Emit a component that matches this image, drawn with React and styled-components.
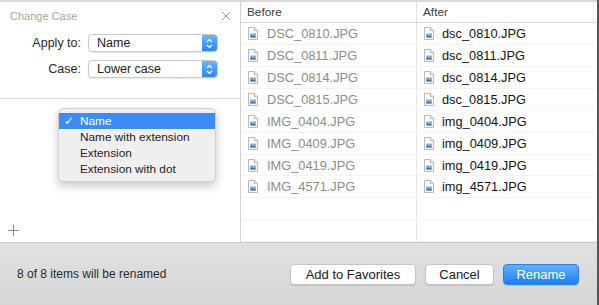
import styled, { createGlobalStyle } from "styled-components";

const GlobalStyle = createGlobalStyle`
  html, body {
    margin: 0;
    padding: 0;
    background: #555;
  }
  body {
    font-family: "Liberation Sans", Helvetica, Arial, sans-serif;
    -webkit-font-smoothing: antialiased;
  }
`;

const Window = styled.div`
  width: 597px;
  height: 305px;
  box-sizing: border-box;
  border-top: 2px solid #d9d9d9;
  background: #fff;
  display: flex;
  flex-direction: column;
`;

const Main = styled.div`
  display: flex;
  height: 240px;
`;

const LeftPanel = styled.div`
  position: relative;
  width: 240px;
  border-right: 1px solid #d4d4d4;
  display: flex;
  flex-direction: column;
`;

const TitleBar = styled.div`
  height: 28px;
  padding: 0 9px 0 10px;
  display: flex;
  align-items: center;
  justify-content: space-between;
  font-size: 11px;
  color: #a3a3a3;
`;

const CloseIcon = styled.svg`
  width: 10px;
  height: 10px;
`;

const Form = styled.div`
  display: grid;
  grid-template-columns: 81px 130px;
  column-gap: 7px;
  row-gap: 8px;
  margin-top: 4px;
  padding-bottom: 20px;
  border-bottom: 1px solid #d6d6d6;
  align-items: center;
`;

const Label = styled.div`
  text-align: right;
  font-size: 12.5px;
  color: #2a2a2a;
`;

const Select = styled.div`
  height: 18px;
  box-sizing: border-box;
  border: 1px solid #c9c9c9;
  border-radius: 4px;
  background: #fff;
  display: flex;
  align-items: stretch;
  overflow: hidden;
  box-shadow: 0 1px 1px rgba(0, 0, 0, 0.08);
`;

const SelectValue = styled.div`
  flex: 1;
  padding-left: 8px;
  font-size: 12.5px;
  line-height: 16px;
  color: #222;
`;

const Stepper = styled.div`
  width: 15px;
  background: linear-gradient(#6db4fb, #2b85f5);
  display: flex;
  align-items: center;
  justify-content: center;
`;

const Spacer = styled.div`
  flex: 1;
  display: flex;
  align-items: flex-end;
  padding: 0 0 6px 8px;
`;

const PlusIcon = styled.svg`
  width: 11px;
  height: 11px;
`;

const Menu = styled.div`
  position: absolute;
  top: 106px;
  left: 58px;
  width: 158px;
  padding: 4px 0;
  background: #efefef;
  border-radius: 5px;
  border: 1px solid #d0d0d0;
  box-sizing: border-box;
  box-shadow: 0 4px 10px rgba(0, 0, 0, 0.22);
`;

const MenuItem = styled.div`
  height: 16px;
  display: flex;
  align-items: center;
  font-size: 11.8px;
  padding-left: 21px;
  position: relative;
  color: ${(p) => (p.active ? "#fff" : "#222")};
  background: ${(p) => (p.active ? "#3b8cf5" : "transparent")};
`;

const Check = styled.span`
  position: absolute;
  left: 5px;
  font-family: "DejaVu Sans", sans-serif;
  font-size: 12px;
`;

const RightPanel = styled.div`
  flex: 1;
  display: flex;
  flex-direction: column;
`;

const HeaderRow = styled.div`
  display: grid;
  grid-template-columns: 175px 1fr;
  height: 21px;
  border-bottom: 1px solid #d8d8d8;
`;

const HeaderCell = styled.div`
  display: flex;
  align-items: center;
  padding-left: 6px;
  font-size: 11.8px;
  color: #3c3c3c;
  border-left: ${(p) => (p.divided ? "1px solid #e2e2e2" : "none")};
  border-right: ${(p) => (p.last ? "1px solid #ececec" : "none")};
  margin-right: ${(p) => (p.last ? "3px" : "0")};
`;

const Row = styled.div`
  display: grid;
  grid-template-columns: 175px 1fr;
  height: 22.4px;
  box-sizing: border-box;
  border-bottom: 1px solid #f3f3f3;
`;

const Cell = styled.div`
  display: flex;
  align-items: center;
  gap: ${(p) => (p.after ? "8px" : "9px")};
  padding-left: 7px;
  font-size: 12.8px;
  color: ${(p) => (p.after ? "#141414" : "#8c8c8c")};
  border-left: ${(p) => (p.after ? "1px solid #e6e6e6" : "none")};
`;

const FileSvg = styled.svg`
  width: 10px;
  height: 13px;
  flex: none;
`;

const BottomBar = styled.div`
  flex: 1;
  display: flex;
  align-items: center;
  padding: 0 18px 0 17px;
  border-top: 1px solid #c9c9c9;
  background: linear-gradient(#e1e1e1, #d6d6d6);
`;

const Status = styled.div`
  flex: 1;
  font-size: 12px;
  color: #2a2a2a;
`;

const Buttons = styled.div`
  display: flex;
  gap: 9px;
`;

const Button = styled.button`
  height: 21px;
  width: ${(p) => p.w}px;
  border-radius: 4px;
  font-family: inherit;
  font-size: 13px;
  padding: 0;
  border: 1px solid ${(p) => (p.primary ? "#2a80ee" : "#c4c4c4")};
  color: ${(p) => (p.primary ? "#fff" : "#222")};
  background: ${(p) =>
    p.primary ? "linear-gradient(#64affb, #1f7ff4)" : "#fff"};
  box-shadow: 0 1px 1px rgba(0, 0, 0, 0.12);
`;

const FileIcon = () => (
  <FileSvg viewBox="0 0 10 13">
    <path
      d="M0.5 0.5 H6.5 L9.5 3.5 V12.5 H0.5 Z"
      fill="#fbfbfb"
      stroke="#b9b9b9"
    />
    <path d="M6.5 0.5 V3.5 H9.5" fill="#eee" stroke="#b9b9b9" />
    <rect x="2" y="6.5" width="6" height="4" fill="#8fb0d6" />
    <path d="M2 10.5 L4 8 L5.5 9.5 L6.5 8.5 L8 10.5 Z" fill="#3f6fa8" />
  </FileSvg>
);

const files = [
  "DSC_0810.JPG",
  "DSC_0811.JPG",
  "DSC_0814.JPG",
  "DSC_0815.JPG",
  "IMG_0404.JPG",
  "IMG_0409.JPG",
  "IMG_0419.JPG",
  "IMG_4571.JPG",
];

const toLower = (name) => {
  const dot = name.lastIndexOf(".");
  return name.slice(0, dot).toLowerCase() + name.slice(dot);
};

const StepperIcon = () => (
  <svg width="7" height="11" viewBox="0 0 7 11">
    <path
      d="M1 4 L3.5 1.5 L6 4 M1 7 L3.5 9.5 L6 7"
      fill="none"
      stroke="#fff"
      strokeWidth="1.2"
    />
  </svg>
);

const App = () => {
  return (
    <>
      <GlobalStyle />
      <Window>
        <Main>
          <LeftPanel>
            <TitleBar>
              Change Case
              <CloseIcon viewBox="0 0 10 10">
                <path d="M1 1 L9 9 M9 1 L1 9" stroke="#9a9a9a" strokeWidth="1" />
              </CloseIcon>
            </TitleBar>
            <Form>
              <Label>Apply to:</Label>
              <Select>
                <SelectValue>Name</SelectValue>
                <Stepper>
                  <StepperIcon />
                </Stepper>
              </Select>
              <Label>Case:</Label>
              <Select>
                <SelectValue>Lower case</SelectValue>
                <Stepper>
                  <StepperIcon />
                </Stepper>
              </Select>
            </Form>
            <Spacer>
              <PlusIcon viewBox="0 0 11 11">
                <path d="M5.5 0 V11 M0 5.5 H11" stroke="#8a8a8a" strokeWidth="1" />
              </PlusIcon>
            </Spacer>
            <Menu>
              <MenuItem active>
                <Check>✓</Check>Name
              </MenuItem>
              <MenuItem>Name with extension</MenuItem>
              <MenuItem>Extension</MenuItem>
              <MenuItem>Extension with dot</MenuItem>
            </Menu>
          </LeftPanel>
          <RightPanel>
            <HeaderRow>
              <HeaderCell>Before</HeaderCell>
              <HeaderCell divided last>
                After
              </HeaderCell>
            </HeaderRow>
            {files.map((f) => (
              <Row key={f}>
                <Cell>
                  <FileIcon />
                  {f}
                </Cell>
                <Cell after>
                  <FileIcon />
                  {toLower(f)}
                </Cell>
              </Row>
            ))}
            <Row>
              <Cell />
              <Cell after />
            </Row>
            <Row>
              <Cell />
              <Cell after />
            </Row>
          </RightPanel>
        </Main>
        <BottomBar>
          <Status>8 of 8 items will be renamed</Status>
          <Buttons>
            <Button w={126}>Add to Favorites</Button>
            <Button w={69}>Cancel</Button>
            <Button w={76} primary>
              Rename
            </Button>
          </Buttons>
        </BottomBar>
      </Window>
    </>
  );
};

export default App;
